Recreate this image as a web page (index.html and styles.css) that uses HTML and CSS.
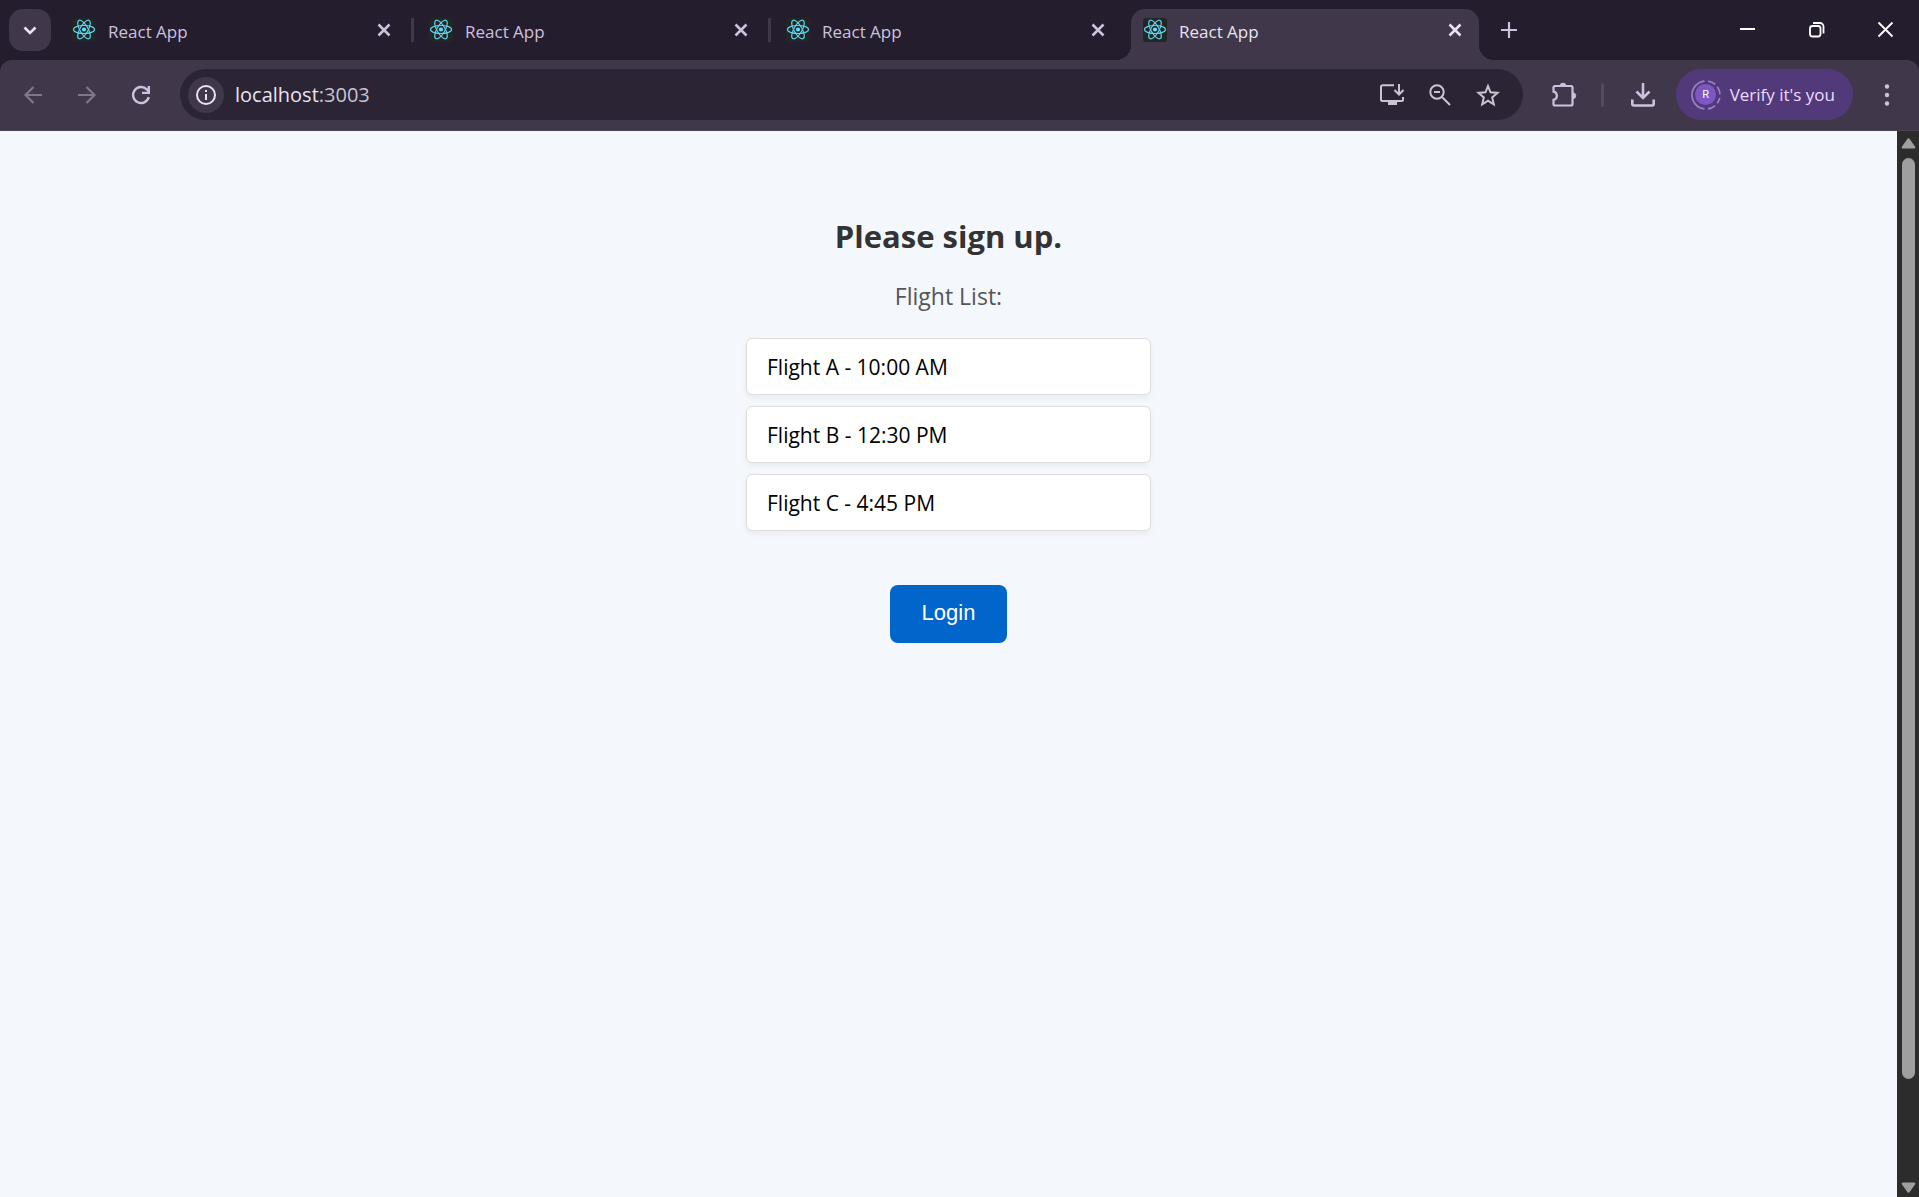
FILE: index.html
```html
<!DOCTYPE html>
<html lang="en">
<head>
<meta charset="utf-8">
<meta name="viewport" content="width=device-width, initial-scale=1">
<title>React App</title>
<link rel="stylesheet" href="styles.css">
</head>
<body>
<svg class="defs" aria-hidden="true">
  <symbol id="react" viewBox="0 0 24 24">
    <rect width="24" height="24" rx="3" fill="#222624"/>
    <g fill="none" stroke="#5ed3ee" stroke-width="1.200">
      <ellipse cx="12" cy="11.500" rx="10.500" ry="4"/>
      <ellipse cx="12" cy="11.500" rx="10.500" ry="4" transform="rotate(60 12 11.500)"/>
      <ellipse cx="12" cy="11.500" rx="10.500" ry="4" transform="rotate(120 12 11.500)"/>
    </g>
    <circle cx="12" cy="11.500" r="2.100" fill="#61dafb"/>
  </symbol>
  <symbol id="close" viewBox="0 0 24 24">
    <path d="M6.500 6.500l11 11M17.500 6.500l-11 11" fill="none" stroke="currentColor" stroke-width="2.600"/>
  </symbol>
</svg>

<header class="browser">
  <div class="tabstrip">
    <button class="tab-search" aria-label="Search tabs">
      <svg class="icon" viewBox="0 0 24 24"><path d="M6.500 9.500l5.500 5.500 5.500-5.500" fill="none" stroke="currentColor" stroke-width="2.600"/></svg>
    </button>
    <div class="tabs">
      <div class="tab"><svg class="icon"><use href="#react"/></svg><span class="tab-title">React App</span><button class="tab-close" aria-label="Close tab"><svg class="icon"><use href="#close"/></svg></button></div>
      <span class="tab-divider"></span>
      <div class="tab"><svg class="icon"><use href="#react"/></svg><span class="tab-title">React App</span><button class="tab-close" aria-label="Close tab"><svg class="icon"><use href="#close"/></svg></button></div>
      <span class="tab-divider"></span>
      <div class="tab"><svg class="icon"><use href="#react"/></svg><span class="tab-title">React App</span><button class="tab-close" aria-label="Close tab"><svg class="icon"><use href="#close"/></svg></button></div>
      <span class="tab-divider hidden"></span>
      <div class="tab active"><svg class="icon"><use href="#react"/></svg><span class="tab-title">React App</span><button class="tab-close" aria-label="Close tab"><svg class="icon"><use href="#close"/></svg></button></div>
    </div>
    <button class="new-tab" aria-label="New tab">
      <svg class="icon" viewBox="0 0 24 24"><path d="M12 4v16M4 12h16" fill="none" stroke="currentColor" stroke-width="2.200"/></svg>
    </button>
    <div class="window-controls">
      <button aria-label="Minimize"><svg class="icon" viewBox="0 0 24 24"><path d="M5 11h15" fill="none" stroke="currentColor" stroke-width="2"/></svg></button>
      <button aria-label="Restore"><svg class="icon" viewBox="0 0 24 24"><g fill="none" stroke="currentColor" stroke-width="1.800"><rect x="6" y="8" width="10.500" height="10.500" rx="2.500"/><path d="M9 5h7a3.500 3.500 0 0 1 3.500 3.500V15.500"/></g></svg></button>
      <button aria-label="Close"><svg class="icon" viewBox="0 0 24 24"><path d="M5.500 4.500l14 14M19.500 4.500l-14 14" fill="none" stroke="currentColor" stroke-width="1.800"/></svg></button>
    </div>
  </div>

  <div class="toolbar">
    <nav class="nav">
      <button class="dim" aria-label="Back"><svg class="icon" viewBox="0 0 24 24"><path d="M21 12H5M12.500 4L4.500 12l8 8" fill="none" stroke="currentColor" stroke-width="2.200"/></svg></button>
      <button class="dim" aria-label="Forward"><svg class="icon" viewBox="0 0 24 24"><path d="M3 12h16M11.500 4l8 8-8 8" fill="none" stroke="currentColor" stroke-width="2.200"/></svg></button>
      <button aria-label="Reload"><svg class="icon" viewBox="0 0 24 24"><path d="M19.800 14.200A8 8 0 1 1 17.800 6.400L20 8.800" fill="none" stroke="currentColor" stroke-width="2.400"/><path d="M21 3v8h-8V8.700h5.600V3z" fill="currentColor"/></svg></button>
    </nav>
    <div class="omnibox">
      <button class="site-info" aria-label="View site information"><svg class="icon" viewBox="0 0 24 24"><circle cx="12" cy="12" r="9" fill="none" stroke="currentColor" stroke-width="2"/><path d="M11 7h2v2h-2zM11 11h2v6h-2z" fill="currentColor"/></svg></button>
      <a class="url" href="#">localhost<span class="port">:3003</span></a>
      <div class="omnibox-actions">
        <button aria-label="Install app"><svg class="icon" viewBox="0 0 24 24"><path d="M14 2.200H2.500A1.500 1.500 0 0 0 1 3.700V16.500A1.500 1.500 0 0 0 2.500 18H21.500A1.500 1.500 0 0 0 23 16.500V14M19 1v10M14.500 7l4.500 4.500L23.500 7" fill="none" stroke="currentColor" stroke-width="2"/><path d="M8 18h9v4H8z" fill="currentColor"/></svg></button>
        <button aria-label="Zoom"><svg class="icon" viewBox="0 0 24 24"><g fill="none" stroke="currentColor" stroke-width="2"><circle cx="9" cy="9" r="6.700"/><path d="M14 14l8 8M6 9h6"/></g></svg></button>
        <button aria-label="Bookmark this tab"><svg class="icon" viewBox="0 0 24 24"><path d="M12 3l2.500 6.300 7 .6-5.300 4.500 1.600 7L12 17.600l-5.800 3.800 1.600-7L2.500 9.900l7-.6z" fill="none" stroke="currentColor" stroke-width="2"/></svg></button>
      </div>
    </div>
    <div class="actions">
      <button aria-label="Extensions"><svg class="icon wide" viewBox="0 0 28 26"><path d="M5 4h16a1.500 1.500 0 0 1 1.500 1.500V22a1.500 1.500 0 0 1-1.500 1.500H5a1.500 1.500 0 0 1-1.500-1.500V17.800C8 17 8 10.500 3.500 9.700V5.500A1.500 1.500 0 0 1 5 4z" fill="none" stroke="currentColor" stroke-width="2.200"/><path d="M10 4a3 3 0 0 1 6 0zM22.800 10.700a3 3 0 0 1 0 6z" fill="currentColor" stroke="currentColor" stroke-width=".6"/></svg></button>
      <span class="divider"></span>
      <button aria-label="Downloads"><svg class="icon" viewBox="0 0 24 24"><path d="M12 0v14M5.500 8.500L12 15l6.500-6.500M1.300 16.500V21A1.500 1.500 0 0 0 2.800 22.500H21.200A1.500 1.500 0 0 0 22.700 21V16.500" fill="none" stroke="currentColor" stroke-width="2.600"/></svg></button>
      <button class="profile">
        <span class="avatar">
          <svg class="ring" viewBox="0 0 30 30"><g fill="none" stroke="#9d80c9" stroke-width="1.700"><path d="M13.500 1.080A14 14 0 0 0 13.500 28.920"/><path d="M17 1.140A14 14 0 0 1 28.920 16.500" stroke-dasharray="8 3"/><path d="M17 28.860A14 14 0 0 0 28.920 13.500" stroke-dasharray="8 3 6 20"/></g></svg>
          <span class="initial">R</span>
        </span>
        Verify it's you
      </button>
      <button class="menu" aria-label="Menu"><svg class="icon" viewBox="0 0 24 24"><g fill="currentColor"><circle cx="12" cy="3.500" r="2.200"/><circle cx="12" cy="12" r="2.200"/><circle cx="12" cy="20.500" r="2.200"/></g></svg></button>
    </div>
  </div>
</header>

<div class="viewport">
  <main class="page">
    <h1>Please sign up.</h1>
    <p class="subtitle">Flight List:</p>
    <ul class="flights">
      <li>Flight A - 10:00 AM</li>
      <li>Flight B - 12:30 PM</li>
      <li>Flight C - 4:45 PM</li>
    </ul>
    <button class="login">Login</button>
  </main>
  <div class="scrollbar" aria-hidden="true">
    <svg class="arrow" viewBox="0 0 22 27"><path d="M10 8.500Q11.500 6 13 8.500L18 15.500Q19 17.500 17 17.500H6Q4 17.500 5 15.500z" fill="#9f9f9f"/></svg>
    <div class="track"><div class="thumb"></div></div>
    <svg class="arrow" viewBox="0 0 22 27"><path d="M10 21.500Q11.500 24 13 21.500L18 14.500Q19 12.500 17 12.500H6Q4 12.500 5 14.500z" fill="#9f9f9f"/></svg>
  </div>
</div>
</body>
</html>
```

FILE: styles.css
```css
* { box-sizing: border-box; }

body {
  margin: 0;
  min-height: 100vh;
  display: flex;
  flex-direction: column;
  font-family: "Open Sans", "Noto Sans", sans-serif;
  background: #f4f7fc;
}

button {
  margin: 0;
  padding: 0;
  border: 0;
  background: none;
  color: inherit;
  font: inherit;
  display: flex;
  align-items: center;
  justify-content: center;
  flex: none;
}

.defs { display: none; }
.icon { width: 24px; height: 24px; flex: none; display: block; }
.icon.wide { width: 28px; height: 26px; }

/* Browser frame */
.browser { background: #241d2e; color: #cdc1de; }

.tabstrip {
  display: flex;
  align-items: center;
  height: 60px;
  padding-left: 9px;
}

.tab-search {
  width: 42px;
  height: 42px;
  margin-right: 9px;
  border-radius: 14px;
  background: #40374b;
  color: #eae4f0;
}

.tabs { display: flex; align-items: center; align-self: stretch; }

.tab {
  display: flex;
  align-items: center;
  width: 348px;
  height: 51px;
  padding: 0 12px 9px;
  gap: 12px;
  align-self: flex-end;
  font-size: 17px;
  line-height: 24px;
}

.tab-title { flex: 1; padding-top: 3px; }

.tab-divider {
  width: 3px;
  height: 24px;
  margin: 0 3px;
  background: #40374b;
}
.tab-divider.hidden { visibility: hidden; }

.tab.active {
  position: relative;
  background: #40374b;
  color: #e9e3ef;
  border-radius: 14px 14px 0 0;
}
.tab.active::before,
.tab.active::after {
  content: "";
  position: absolute;
  bottom: 0;
  width: 15px;
  height: 15px;
}
.tab.active::before {
  right: 100%;
  background: radial-gradient(circle at 0 0, transparent 15px, #40374b 15px);
}
.tab.active::after {
  left: 100%;
  background: radial-gradient(circle at 100% 0, transparent 15px, #40374b 15px);
}

.new-tab { width: 42px; height: 42px; margin-left: 9px; }

.window-controls { display: flex; margin-left: auto; color: #fff; }
.window-controls button { width: 69px; height: 60px; }

.toolbar {
  display: flex;
  align-items: center;
  height: 71px;
  padding: 0 8px 1px 6px;
  background: #40374b;
  border-bottom: 1px solid #4b4551;
  border-radius: 12px 12px 0 0;
}

.nav { display: flex; }
.nav button { width: 54px; height: 51px; }
.nav .dim { color: #7f778b; }

.omnibox {
  flex: 1;
  display: flex;
  align-items: center;
  height: 51px;
  margin-left: 12px;
  padding: 0 11px 0 8px;
  border-radius: 26px;
  background: #2b2435;
}

.site-info {
  width: 36px;
  height: 36px;
  border-radius: 50%;
  background: #40374b;
  color: #e9e3ef;
}

.url {
  flex: 1;
  padding-left: 11px;
  color: #e9e3ef;
  font-size: 20px;
  line-height: 28px;
  text-decoration: none;
}
.port { color: #c9c3cf; }

.omnibox-actions { display: flex; color: #cac5cc; }
.omnibox-actions button { width: 48px; height: 48px; }

.actions { display: flex; align-items: center; }
.actions > button { height: 51px; width: 48px; }
.actions > button:first-child { margin-left: 17px; }
.divider { width: 3px; height: 24px; margin: 0 15px 0 13px; border-radius: 2px; background: #544a60; }

.actions > .profile {
  width: auto;
  margin: 0 10px 0 9px;
  padding: 0 18px 0 15px;
  gap: 9px;
  border-radius: 26px;
  background: #523a7a;
  color: #eadcff;
  font-size: 17px;
}

.avatar { display: grid; place-items: center; width: 30px; height: 30px; }
.ring, .initial { grid-area: 1 / 1; }
.ring { width: 30px; height: 30px; }
.initial {
  width: 21px;
  height: 21px;
  border-radius: 50%;
  background: #7e57c2;
  color: #fff;
  font: 11px/21px Roboto, sans-serif;
  text-align: center;
}

/* Page */
.viewport { flex: 1; display: flex; }

.page {
  flex: 1;
  display: flex;
  flex-direction: column;
  align-items: center;
  padding-top: 85px;
}

h1 {
  margin: 0 0 22px;
  color: #333;
  font-size: 31px;
  line-height: 40px;
}

.subtitle {
  margin: 0 0 24px;
  color: #555;
  font-size: 23px;
  line-height: 36px;
}

.flights {
  display: flex;
  flex-direction: column;
  gap: 11px;
  width: 405px;
  max-width: 100%;
  margin: 0 0 54px;
  padding: 0;
  list-style: none;
}
.flights li {
  padding: 14px 20px 12px;
  border: 1px solid #ddd;
  border-radius: 6px;
  background: #fff;
  box-shadow: 0 3px 6px rgba(0, 0, 0, 0.05);
  color: #000;
  font-size: 21px;
  line-height: 29px;
}

.login {
  padding: 14px 32px 16px;
  border-radius: 8px;
  background: #06c;
  color: #fff;
  font: 22px/28px "Liberation Sans", Arial, sans-serif;
}

.scrollbar {
  display: flex;
  flex-direction: column;
  width: 22px;
  background: #2c2c2c;
}
.arrow { width: 22px; height: 27px; display: block; }
.track { flex: 1; }
.thumb { width: 13px; height: 91%; margin-left: 5px; border-radius: 7px; background: #9f9f9f; }
```
